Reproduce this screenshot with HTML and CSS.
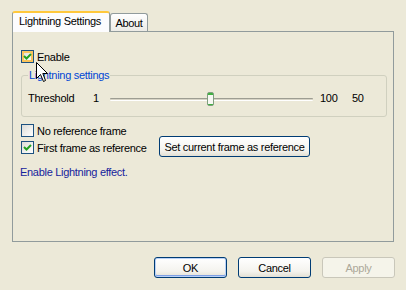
FILE: index.html
```html
<!DOCTYPE html>
<html lang="en">
<head>
    <meta charset="UTF-8">
    <title>Lightning Settings</title>
    <link rel="stylesheet" href="styles.css">
</head>
<body>
    <div class="dialog">
        <div class="tabs">
            <div class="tab active">Lightning Settings</div>
            <div class="tab">About</div>
        </div>

        <div class="panel">
            <label class="check-row">
                <span class="checkbox checked hover">
                    <svg width="11" height="11" viewBox="0 0 11 11"><path d="M2 5 L4.5 7.5 L9 3" fill="none" stroke="#21A121" stroke-width="2"/></svg>
                </span>
                Enable
            </label>

            <fieldset class="group">
                <legend>Lightning settings</legend>
                <div class="slider-row">
                    <span class="slider-label">Threshold</span>
                    <span class="slider-min">1</span>
                    <span class="track">
                        <span class="thumb"></span>
                    </span>
                    <span class="slider-max">100</span>
                    <span class="slider-value">50</span>
                </div>
            </fieldset>

            <div class="ref-row">
                <div class="ref-options">
                    <label class="check-row">
                        <span class="checkbox"></span>
                        No reference frame
                    </label>
                    <label class="check-row">
                        <span class="checkbox checked">
                            <svg width="11" height="11" viewBox="0 0 11 11"><path d="M2 5 L4.5 7.5 L9 3" fill="none" stroke="#21A121" stroke-width="2"/></svg>
                        </span>
                        First frame as reference
                    </label>
                </div>
                <button class="btn btn-wide">Set current frame as reference</button>
            </div>

            <p class="status">Enable Lightning effect.</p>
        </div>

        <div class="actions">
            <button class="btn btn-default">OK</button>
            <button class="btn">Cancel</button>
            <button class="btn" disabled>Apply</button>
        </div>
    </div>

    <svg class="cursor" width="13" height="21" viewBox="0 0 13 21">
        <path d="M0.5 0.5 L0.5 16.5 L4.5 12.5 L7.5 19.5 L9.5 18.5 L6.8 11.5 L11.5 11.5 Z" fill="#fff" stroke="#000" stroke-width="1"/>
    </svg>
</body>
</html>
```

FILE: styles.css
```css
body {
    margin: 0;
    width: 406px;
    height: 290px;
    background-color: #ECE9D8;
    font-family: "Liberation Sans", Arial, sans-serif;
    font-size: 11px;
    letter-spacing: -0.3px;
    color: #000;
    position: relative;
    overflow: hidden;
}

.dialog {
    padding: 11px 12px 0 12px;
}

.tabs {
    display: flex;
    align-items: flex-end;
    height: 20px;
}

.tab {
    box-sizing: border-box;
    height: 18px;
    width: 38px;
    border: 1px solid #919B9C;
    border-bottom: none;
    border-radius: 3px 3px 0 0;
    background: linear-gradient(#FFFFFF, #ECEBE6);
    text-align: center;
    line-height: 19px;
}

.tab.active {
    position: relative;
    z-index: 1;
    width: 98px;
    height: 21px;
    margin-bottom: -1px;
    border-top: 2px solid #FFC83C;
    background: #FCFCFE;
    line-height: 17px;
    padding-right: 2px;
}

.panel {
    box-sizing: border-box;
    height: 211px;
    border: 1px solid #919B9C;
    padding: 18px 8px 0 8px;
}

.check-row {
    display: flex;
    align-items: center;
    gap: 3px;
    height: 13px;
    line-height: 14px;
}

.checkbox {
    box-sizing: border-box;
    width: 13px;
    height: 13px;
    border: 1px solid #1C5180;
    background: linear-gradient(135deg, #DCDCD7, #FFFFFF);
    display: flex;
    align-items: center;
    justify-content: center;
}

.checkbox.hover {
    box-shadow: inset 0 0 0 2px #F9C45C;
}

.group {
    margin: 6px 0 0 0;
    padding: 8px 6px 10px 6px;
    width: 366px;
    box-sizing: border-box;
    border: 1px solid #D0D0BF;
    border-radius: 3px;
}

.group legend {
    padding: 0 1px;
    color: #0046D5;
    line-height: 13px;
}

.slider-row {
    display: flex;
    align-items: center;
    height: 16px;
}

.slider-label {
    width: 65px;
}

.slider-min {
    width: 17px;
}

.track {
    position: relative;
    width: 203px;
    height: 3px;
    margin-top: 3px;
    box-sizing: border-box;
    border-top: 1px solid #9D9D92;
    border-bottom: 1px solid #FFFFFF;
    border-radius: 1px;
    background: #D6D3C5;
}

.thumb {
    position: absolute;
    left: 97px;
    top: -7px;
    box-sizing: border-box;
    width: 7px;
    height: 14px;
    border: 1px solid #7E9F7E;
    border-radius: 2px;
    background: linear-gradient(#3FB13F 0 2px, #F7F7F3 2px 11px, #3FB13F 11px);
}

.slider-max {
    margin-left: 7px;
    width: 32px;
}

.ref-row {
    display: flex;
    margin-top: 7px;
}

.ref-options {
    display: flex;
    flex-direction: column;
    gap: 4px;
    width: 138px;
}

.btn {
    box-sizing: border-box;
    height: 21px;
    padding: 0 2px;
    border: 1px solid #003C74;
    border-radius: 3px;
    background: linear-gradient(#FFFFFF, #F4F3EE 70%, #E3E0D4);
    font-family: "Liberation Sans", Arial, sans-serif;
    font-size: 11px;
    letter-spacing: -0.3px;
    color: #000;
    white-space: nowrap;
}

.btn-wide {
    width: 151px;
    align-self: flex-end;
    margin-bottom: -3px;
}

.btn-default {
    box-shadow: inset 0 0 0 1px #B9D1F7, inset 0 -1px 0 1px #7FA0E5;
}

.btn:disabled {
    border-color: #C9C7BA;
    background: #F5F4EA;
    color: #ACA899;
}

.status {
    margin: 12px 0 0 -1px;
    line-height: 13px;
    color: #15239C;
}

.actions {
    display: flex;
    justify-content: flex-end;
    gap: 11px;
    margin: 15px -1px 0 0;
}

.actions .btn {
    width: 73px;
}

.cursor {
    position: absolute;
    left: 36px;
    top: 62px;
}
```
